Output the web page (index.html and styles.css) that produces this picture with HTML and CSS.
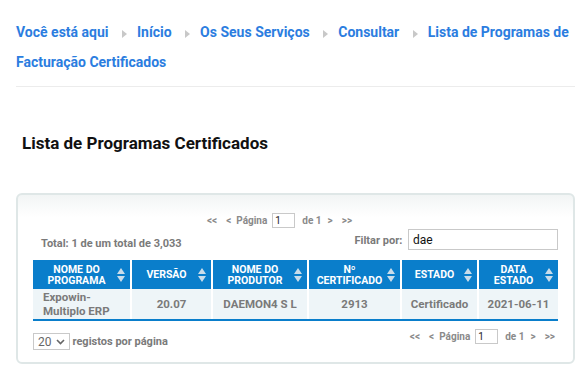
FILE: index.html
```html
<!DOCTYPE html>
<html lang="pt">

<head>
    <meta charset="UTF-8">
    <meta name="viewport" content="width=device-width, initial-scale=1.0">
    <title>Lista de Programas Certificados</title>
    <link rel="stylesheet" href="styles.css">
</head>

<body>
    <div class="page">
        <nav class="breadcrumb">
            <span class="crumb">Você está aqui</span>
            <a href="#">Início</a>
            <a href="#">Os Seus Serviços</a>
            <a href="#">Consultar</a>
            <a href="#">Lista de Programas de Facturação Certificados</a>
        </nav>

        <h1 class="title">Lista de Programas Certificados</h1>

        <div class="card">
            <div class="pager pager-top">
                <span class="pg-link">&lt;&lt;</span>
                <span class="pg-link">&lt;</span>
                <span>Página</span>
                <input class="pg-input" type="text" value="1">
                <span>de 1</span>
                <span class="pg-link">&gt;</span>
                <span class="pg-link">&gt;&gt;</span>
            </div>
            <div class="toolbar">
                <span class="total">Total: 1 de um total de 3,033</span>
                <label class="filter">Filtar por: <input type="text" value="dae"></label>
            </div>
            <table class="list">
                <colgroup>
                    <col class="c1"><col class="c2"><col class="c3"><col class="c4"><col class="c5"><col class="c6">
                </colgroup>
                <thead>
                    <tr>
                        <th><span>NOME DO<br>PROGRAMA</span><i class="sort"></i></th>
                        <th><span>VERSÃO</span><i class="sort"></i></th>
                        <th><span>NOME DO<br>PRODUTOR</span><i class="sort"></i></th>
                        <th><span>Nº<br>CERTIFICADO</span><i class="sort"></i></th>
                        <th><span>ESTADO</span><i class="sort"></i></th>
                        <th><span>DATA<br>ESTADO</span><i class="sort"></i></th>
                    </tr>
                </thead>
                <tbody>
                    <tr>
                        <td class="left">Expowin-<br>Multiplo ERP</td>
                        <td>20.07</td>
                        <td>DAEMON4 S L</td>
                        <td>2913</td>
                        <td>Certificado</td>
                        <td>2021-06-11</td>
                    </tr>
                </tbody>
            </table>
            <div class="footer">
                <div class="per-page">
                    <span class="select">20 <svg width="9" height="6" viewBox="0 0 9 6"><path d="M1 1 L4.5 4.5 L8 1" fill="none" stroke="#666" stroke-width="1.6"/></svg></span>
                    <span>registos por página</span>
                </div>
                <div class="pager">
                    <span class="pg-link">&lt;&lt;</span>
                    <span class="pg-link">&lt;</span>
                    <span>Página</span>
                    <input class="pg-input" type="text" value="1">
                    <span>de 1</span>
                    <span class="pg-link">&gt;</span>
                    <span class="pg-link">&gt;&gt;</span>
                </div>
            </div>
        </div>
    </div>
</body>

</html>
```
FILE: styles.css
```css
body {
    margin: 0;
    font-family: Roboto, "Liberation Sans", sans-serif;
    background-color: #fff;
}

.page {
    padding: 0 11px 0 16px;
}

.breadcrumb {
    padding-top: 17px;
    padding-bottom: 9px;
    border-bottom: 1px solid #ececec;
    font-size: 14px;
    font-weight: bold;
    line-height: 30px;
    color: #2b7de0;
}

.breadcrumb a,
.breadcrumb .crumb {
    color: #2b7de0;
    text-decoration: none;
}

/* grey arrow between the links */
.breadcrumb a::before {
    content: "";
    display: inline-block;
    width: 0;
    height: 0;
    margin: 0 10px 0 10px;
    border-top: 4px solid transparent;
    border-bottom: 4px solid transparent;
    border-left: 5px solid #c8c8c8;
    vertical-align: -1px;
}

.title {
    margin: 46px 0 0 6px;
    font-size: 17px;
    font-weight: bold;
    color: #111;
}

.card {
    margin-top: 40px;
    padding: 18px 15px 12px 15px;
    border: 2px solid #dfe7e7;
    border-radius: 6px;
    background: linear-gradient(#f2f5f5, #fff 22px);
}

.pager {
    font-size: 10px;
    font-weight: bold;
    color: #8a8a8a;
    display: flex;
    align-items: center;
}

.pager-top {
    justify-content: center;
    padding-right: 32px;
}

.pg-link {
    margin-right: 5px;
}

.pager .pg-link:first-child {
    margin-right: 9px;
}

.pager .pg-link:last-child {
    margin-left: 4px;
    margin-right: 0;
}

.pg-input {
    width: 17px;
    height: 11px;
    margin: 0 7px 0 5px;
    padding: 1px 2px;
    border: 1px solid #c9c9c9;
    font-family: inherit;
    font-size: 10px;
    color: #222;
}

.pager .pg-input + span {
    margin-right: 6px;
}

.toolbar {
    display: flex;
    justify-content: space-between;
    align-items: flex-end;
    margin-top: 1px;
    padding: 0 0 0 8px;
}

.total {
    font-size: 11px;
    font-weight: bold;
    color: #7a7a7a;
}

.filter {
    font-size: 11px;
    font-weight: bold;
    color: #7a7a7a;
}

.filter input {
    width: 140px;
    height: 17px;
    margin-left: 3px;
    padding: 1px 4px;
    border: 1px solid #c9c9c9;
    font-family: inherit;
    font-size: 12px;
    color: #111;
}

.list {
    width: 100%;
    margin-top: 10px;
    border-collapse: collapse;
    table-layout: fixed;
    font-size: 11px;
}

.c1 { width: 98px; }
.c2 { width: 81px; }
.c3 { width: 96px; }
.c4 { width: 93px; }
.c5 { width: 77px; }
.c6 { width: 80px; }

.list th {
    position: relative;
    height: 29px;
    padding: 0 14px 0 4px;
    background-color: #0a7ecb;
    color: #fff;
    font-size: 10.5px;
    font-weight: bold;
    line-height: 11px;
    text-align: center;
    border-left: 2px solid #fff;
}

.list th:first-child,
.list td:first-child {
    border-left: none;
}

.sort {
    position: absolute;
    right: 5px;
    top: 50%;
    margin-top: -8px;
    width: 8px;
    height: 16px;
}

.sort::before,
.sort::after {
    content: "";
    position: absolute;
    left: 0;
    border-left: 4px solid transparent;
    border-right: 4px solid transparent;
}

.sort::before {
    top: 1px;
    border-bottom: 6px solid #c9dcea;
}

.sort::after {
    bottom: 1px;
    border-top: 6px solid #c9dcea;
}

.list td {
    height: 30px;
    padding: 0 4px;
    background-color: #eef5f8;
    border-left: 2px solid #fff;
    border-bottom: 2px solid #0a7ecb;
    color: #7a7a7a;
    font-weight: bold;
    font-size: 11.5px;
    text-align: center;
    line-height: 14px;
    white-space: nowrap;
}

.list td.left {
    text-align: left;
    padding-left: 10px;
}

.footer {
    display: flex;
    justify-content: space-between;
    align-items: center;
    margin-top: 12px;
}

.per-page {
    display: flex;
    align-items: center;
    font-size: 11px;
    font-weight: bold;
    color: #7a7a7a;
}

.select {
    display: inline-flex;
    align-items: center;
    gap: 4px;
    height: 15px;
    padding: 0 4px;
    margin-right: 3px;
    border: 1px solid #c9c9c9;
    font-weight: normal;
    font-size: 12px;
    color: #666;
}

.footer .pager {
    margin-top: -10px;
    padding-right: 3px;
}
```
